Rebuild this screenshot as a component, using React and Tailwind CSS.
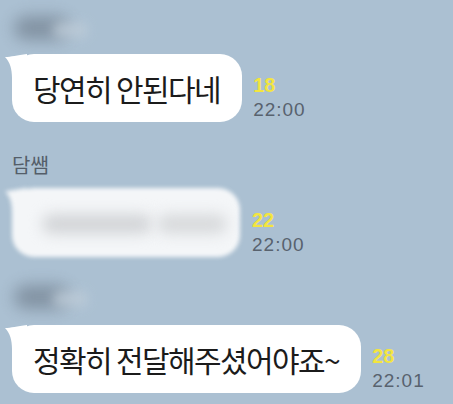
const kr = { fontFamily: '"Noto Sans CJK KR", "Noto Sans", sans-serif' };
const num = { fontFamily: '"Liberation Sans", Arial, sans-serif' };

const Tail = ({ color = '#ffffff' }) => (
    <svg
        className="absolute -left-[7px] top-0"
        width="22"
        height="24"
        viewBox="0 0 22 24"
    >
        <path d="M0 3 C6 3 12 1 22 0 L22 24 L7 24 C7 15 5 8 0 3 Z" fill={color} />
    </svg>
);

const Meta = ({ count, time }) => (
    <div className="flex flex-col items-start" style={num}>
        <span className="text-[20px] leading-[25px] font-semibold text-[#f3e53f]">{count}</span>
        <span className="text-[19px] leading-[24px] tracking-[1px] text-[#58626e]">{time}</span>
    </div>
);

const BlurName = () => (
    <div className="relative h-[24px] w-[90px]">
        <div className="absolute left-[14px] top-[0px] w-[56px] h-[24px] rounded-full bg-[#7e8e9e] blur-[8px] opacity-90" />
        <div className="absolute left-[52px] top-[6px] w-[36px] h-[16px] rounded-full bg-[#bfcdd9] blur-[6px] opacity-80" />
    </div>
);

const Bubble = ({ children }) => (
    <div className="relative ml-[12px] h-[68px] flex items-center rounded-[22px] bg-white pl-[21px] pr-[22px]">
        <Tail />
        <span className="relative text-[30px] tracking-[-1.6px] text-[#1b1b1b] leading-none pb-[1px]" style={kr}>
            {children}
        </span>
    </div>
);

const BlurBubble = () => (
    <div className="relative ml-[12px] h-[69px] w-[228px]">
        <div className="absolute inset-0 blur-[2px]">
            <div className="absolute inset-0 rounded-[22px] bg-[#f4f6f8]" />
            <Tail color="#f4f6f8" />
        </div>
        <div className="absolute left-[30px] top-[26px] w-[110px] h-[20px] rounded-full bg-[#d3d5d8] blur-[7px]" />
        <div className="absolute left-[145px] top-[26px] w-[70px] h-[20px] rounded-full bg-[#d8dadc] blur-[7px]" />
    </div>
);

export default function App() {
    return (
        <div className="w-[453px] h-[404px] overflow-hidden bg-[#abc0d2] flex flex-col pt-[16px]">
            {/* first message */}
            <BlurName />
            <div className="mt-[14px] flex items-end gap-[11px]">
                <Bubble>당연히 안된다네</Bubble>
                <Meta count="18" time="22:00" />
            </div>

            {/* second message */}
            <div className="mt-[31px] ml-[12px] h-[24px] text-[20px] leading-[24px] text-[#545e69]" style={kr}>
                담쌤
            </div>
            <div className="mt-[11px] flex items-end gap-[12px]">
                <BlurBubble />
                <Meta count="22" time="22:00" />
            </div>

            {/* third message */}
            <div className="mt-[28px]">
                <BlurName />
            </div>
            <div className="mt-[16px] flex items-end gap-[11px]">
                <Bubble>정확히 전달해주셨어야죠~</Bubble>
                <Meta count="28" time="22:01" />
            </div>
        </div>
    );
}
